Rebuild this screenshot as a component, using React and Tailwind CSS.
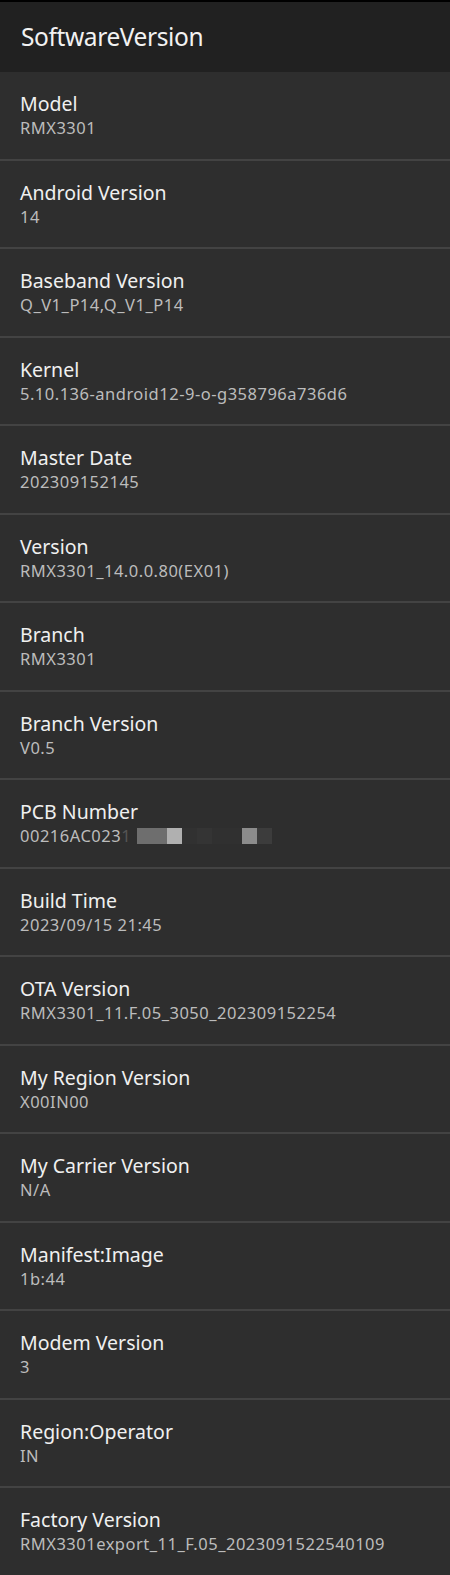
const rows = [
  ["Model", "RMX3301"],
  ["Android Version", "14"],
  ["Baseband Version", "Q_V1_P14,Q_V1_P14"],
  ["Kernel", "5.10.136-android12-9-o-g358796a736d6"],
  ["Master Date", "202309152145"],
  ["Version", "RMX3301_14.0.0.80(EX01)"],
  ["Branch", "RMX3301"],
  ["Branch Version", "V0.5"],
  ["PCB Number", null],
  ["Build Time", "2023/09/15 21:45"],
  ["OTA Version", "RMX3301_11.F.05_3050_202309152254"],
  ["My Region Version", "X00IN00"],
  ["My Carrier Version", "N/A"],
  ["Manifest:Image", "1b:44"],
  ["Modem Version", "3"],
  ["Region:Operator", "IN"],
  ["Factory Version", "RMX3301export_11_F.05_2023091522540109"],
];

// blurred serial, drawn as a mosaic
function PcbValue() {
  return (
    <div className="flex items-center">
      <span>00216AC023</span>
      <span className="text-[#555555]">1</span>
      <div className="ml-[6px] flex h-[16px]">
        <div className="w-[30px] bg-[#6e6e6e]" />
        <div className="w-[15px] bg-[#b0b0b0]" />
        <div className="w-[15px] bg-[#313131]" />
        <div className="w-[15px] bg-[#343434]" />
        <div className="w-[30px] bg-[#303030]" />
        <div className="w-[15px] bg-[#8c8c8c]" />
        <div className="w-[15px] bg-[#3c3c3c]" />
      </div>
    </div>
  );
}

export default function App() {
  return (
    <div className="w-[450px] h-[1575px] overflow-hidden bg-[#2e2e2e] font-['Noto_Sans',sans-serif]">
      <div className="h-[72px] border-t-2 border-black bg-[#212121] flex items-center px-[21px]">
        <h1 className="text-[24.5px] text-[#f2f2f2] tracking-[-0.4px]">SoftwareVersion</h1>
      </div>

      {rows.map(([label, value], idx) => (
        <div
          key={idx}
          className="h-[88.5px] border-b-2 border-[#434343] px-[20px] pt-[19px] box-border"
        >
          <div className="text-[19.5px] leading-[26px] text-[#f0f0f0]">{label}</div>
          <div className="text-[16.5px] leading-[22px] tracking-[0.5px] text-[#bcbcbc]">
            {value === null ? <PcbValue /> : value}
          </div>
        </div>
      ))}
    </div>
  );
}
